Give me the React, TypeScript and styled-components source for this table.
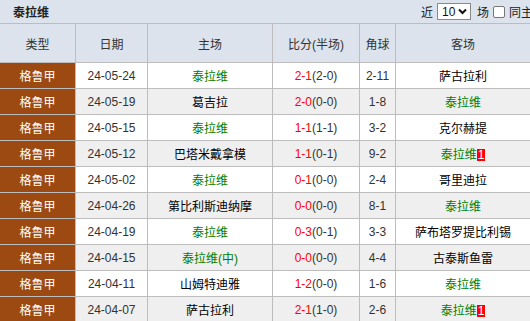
import React from "react";
import styled, { createGlobalStyle } from "styled-components";

const Global = createGlobalStyle`
  html, body { margin: 0; padding: 0; background: #fff; overflow: hidden; }
  body { font-family: "Liberation Sans", "Noto Sans CJK SC", sans-serif; font-size: 12px; color: #333; }
`;

const Page = styled.div`
  width: 530px;
  overflow: hidden;
`;

const TitleBar = styled.div`
  height: 23px;
  border-bottom: 1px solid #bdbdbd;
  background: #dce3ed;
  display: flex;
  align-items: center;
  padding-left: 13px;
  white-space: nowrap;
`;

const Title = styled.span`
  font-weight: bold;
  font-size: 12px;
  color: #222;
  flex: 1;
`;

const Controls = styled.div`
  display: flex;
  align-items: center;
  flex-shrink: 0;
  margin-right: -19px;
  color: #222;
`;

const Label = styled.span<{ $gap?: number }>`
  margin-right: ${(p) => p.$gap ?? 4}px;
`;

const FakeSelect = styled.span`
  box-sizing: border-box;
  width: 34px;
  height: 17px;
  border: 1px solid #8a8a8a;
  background: #fff;
  display: inline-flex;
  align-items: center;
  justify-content: space-between;
  padding: 0 3px 0 4px;
  margin-right: 6px;
  font-size: 12px;
  color: #111;
`;

const Check = styled.span`
  box-sizing: border-box;
  width: 12px;
  height: 12px;
  border: 1px solid #777;
  border-radius: 2px;
  background: #fff;
  margin-right: 4px;
`;

const Table = styled.table`
  width: 530px;
  table-layout: fixed;
  border-collapse: separate;
  border-spacing: 0;
`;

const HeadCell = styled.th`
  height: 38px;
  padding: 0;
  background: #dce3ed;
  font-weight: normal;
  color: #333;
  text-align: center;
  border-bottom: 1px solid #bdbdbd;
  border-right: 1px solid #bdbdbd;
  &:last-child { border-right: none; }
`;

const Row = styled.tr<{ $alt: boolean }>`
  background: ${(p) => (p.$alt ? "#efefef" : "#fff")};
`;

const Cell = styled.td`
  height: 25px;
  padding: 0;
  text-align: center;
  white-space: nowrap;
  overflow: hidden;
  border-bottom: 1px solid #bdbdbd;
  border-right: 1px solid #bdbdbd;
  &:last-child { border-right: none; }
`;

const TypeCell = styled(Cell)`
  background: #9c4a12;
  color: #fff;
`;

const Team = styled.span<{ $self: boolean }>`
  color: ${(p) => (p.$self ? "#008000" : "#000")};
`;

const Badge = styled.span`
  display: inline-block;
  background: #f00;
  color: #fff;
  line-height: 12px;
  padding: 0 1px;
  vertical-align: 0px;
`;

const Score = styled.span`
  color: #f00;
`;

type Match = {
  date: string;
  home: string;
  homeSelf: boolean;
  score: string;
  half: string;
  corner: string;
  away: string;
  awaySelf: boolean;
  badge?: string;
};

const matches: Match[] = [
  { date: "24-05-24", home: "泰拉维", homeSelf: true, score: "2-1", half: "(2-0)", corner: "2-11", away: "萨古拉利", awaySelf: false },
  { date: "24-05-19", home: "葛吉拉", homeSelf: false, score: "2-0", half: "(0-0)", corner: "1-8", away: "泰拉维", awaySelf: true },
  { date: "24-05-15", home: "泰拉维", homeSelf: true, score: "1-1", half: "(1-1)", corner: "3-2", away: "克尔赫提", awaySelf: false },
  { date: "24-05-12", home: "巴塔米戴拿模", homeSelf: false, score: "1-1", half: "(0-1)", corner: "9-2", away: "泰拉维", awaySelf: true, badge: "1" },
  { date: "24-05-02", home: "泰拉维", homeSelf: true, score: "0-1", half: "(0-0)", corner: "2-4", away: "哥里迪拉", awaySelf: false },
  { date: "24-04-26", home: "第比利斯迪纳摩", homeSelf: false, score: "0-0", half: "(0-0)", corner: "8-1", away: "泰拉维", awaySelf: true },
  { date: "24-04-19", home: "泰拉维", homeSelf: true, score: "0-3", half: "(0-1)", corner: "3-3", away: "萨布塔罗提比利锡", awaySelf: false },
  { date: "24-04-15", home: "泰拉维(中)", homeSelf: true, score: "0-0", half: "(0-0)", corner: "4-4", away: "古泰斯鱼雷", awaySelf: false },
  { date: "24-04-11", home: "山姆特迪雅", homeSelf: false, score: "1-2", half: "(0-0)", corner: "1-6", away: "泰拉维", awaySelf: true },
  { date: "24-04-07", home: "萨古拉利", homeSelf: false, score: "2-1", half: "(1-0)", corner: "2-6", away: "泰拉维", awaySelf: true, badge: "1" },
];

const widths = [76, 72, 125, 87, 36, 134];
const heads = ["类型", "日期", "主场", "比分(半场)", "角球", "客场"];

export default function App() {
  return (
    <Page>
      <Global />
      <TitleBar>
        <Title>泰拉维</Title>
        <Controls>
          <Label>近</Label>
          <FakeSelect>
            <span>10</span>
            <svg width="9" height="7" viewBox="0 0 9 7">
              <path d="M1 1.5 L4.5 5 L8 1.5" fill="none" stroke="#111" strokeWidth="2" />
            </svg>
          </FakeSelect>
          <Label>场</Label>
          <Check />
          <Label>同主场</Label>
        </Controls>
      </TitleBar>
      <Table>
        <colgroup>
          {widths.map((w, i) => (
            <col key={i} style={{ width: w }} />
          ))}
        </colgroup>
        <thead>
          <tr>
            {heads.map((h) => (
              <HeadCell key={h}>{h}</HeadCell>
            ))}
          </tr>
        </thead>
        <tbody>
          {matches.map((m, i) => (
            <Row key={m.date} $alt={i % 2 === 1}>
              <TypeCell>格鲁甲</TypeCell>
              <Cell>{m.date}</Cell>
              <Cell>
                <Team $self={m.homeSelf}>{m.home}</Team>
              </Cell>
              <Cell>
                <Score>{m.score}</Score>
                {m.half}
              </Cell>
              <Cell>{m.corner}</Cell>
              <Cell>
                <Team $self={m.awaySelf}>{m.away}</Team>
                {m.badge && <Badge>{m.badge}</Badge>}
              </Cell>
            </Row>
          ))}
        </tbody>
      </Table>
    </Page>
  );
}
